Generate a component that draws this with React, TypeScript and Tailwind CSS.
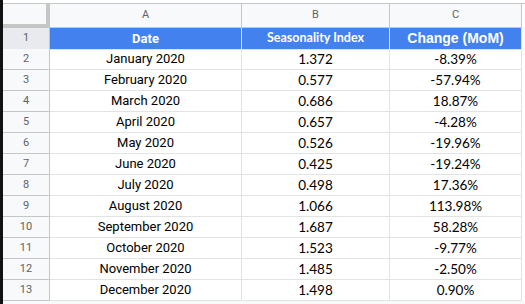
import React from 'react';

const rows = [
  ['January 2020', '1.372', '-8.39%'],
  ['February 2020', '0.577', '-57.94%'],
  ['March 2020', '0.686', '18.87%'],
  ['April 2020', '0.657', '-4.28%'],
  ['May 2020', '0.526', '-19.96%'],
  ['June 2020', '0.425', '-19.24%'],
  ['July 2020', '0.498', '17.36%'],
  ['August 2020', '1.066', '113.98%'],
  ['September 2020', '1.687', '58.28%'],
  ['October 2020', '1.523', '-9.77%'],
  ['November 2020', '1.485', '-2.50%'],
  ['December 2020', '1.498', '0.90%'],
];

const cols = 'grid grid-cols-[47px_192px_148px_132px]';

export default function App() {
  return (
    <div className="w-[525px] h-[304px] bg-white flex overflow-hidden">
      <div className="w-[3px] h-full bg-[#111]" />
      <div className="flex-1 flex flex-col">
        {/* top edge */}
        <div className="h-[3px] bg-white" />
        <div className="border-t border-[#c4c7c5]">
          {/* column letters */}
          <div className={`${cols} h-[24px] font-['Roboto',sans-serif] text-[11px] text-[#5f6368]`}>
            <div className="bg-[#f8f9fa] border-r-4 border-b-4 border-[#c4c7c5]" />
            {['A', 'B', 'C'].map((l) => (
              <div key={l} className="bg-[#f8f9fa] border-r border-b border-[#c4c7c5] flex items-center justify-center">
                {l}
              </div>
            ))}
          </div>

          {/* header row */}
          <div className={`${cols} h-[21px]`}>
            <div className="bg-[#e8eaed] border-r border-b border-[#c4c7c5] flex items-center justify-center font-['Roboto',sans-serif] text-[11px] text-[#5f6368]">
              1
            </div>
            <div className="bg-[#4381ef] border-r border-b border-[#e2e3e3] flex items-center justify-center text-white font-['Roboto',sans-serif] font-bold text-[13px]">
              Date
            </div>
            <div className="bg-[#4381ef] border-r border-b border-[#e2e3e3] flex items-center justify-center text-white font-['Lato',sans-serif] font-bold text-[12.5px]">
              Seasonality Index
            </div>
            <div className="bg-[#4381ef] border-r border-b border-[#e2e3e3] flex items-center justify-center text-white font-['Liberation_Sans',sans-serif] font-bold text-[14px]">
              Change (MoM)
            </div>
          </div>

          {rows.map((r, i) => (
            <div key={i} className={`${cols} h-[21px]`}>
              <div className="bg-[#f8f9fa] border-r border-b border-[#c4c7c5] flex items-center justify-center font-['Roboto',sans-serif] text-[11px] text-[#5f6368]">
                {i + 2}
              </div>
              <div className="border-r border-b border-[#e2e3e3] flex items-center justify-center font-['Roboto',sans-serif] text-[13px] text-black">
                {r[0]}
              </div>
              <div className="border-r border-b border-[#e2e3e3] flex items-center justify-center font-['Lato',sans-serif] text-[13.5px] text-black">
                {r[1]}
              </div>
              <div className="border-r border-b border-[#e2e3e3] flex items-center justify-center font-['Lato',sans-serif] text-[13.5px] text-black">
                {r[2]}
              </div>
            </div>
          ))}
        </div>
        <div className="flex-1 bg-[#f8f9fa]" />
      </div>
    </div>
  );
}
